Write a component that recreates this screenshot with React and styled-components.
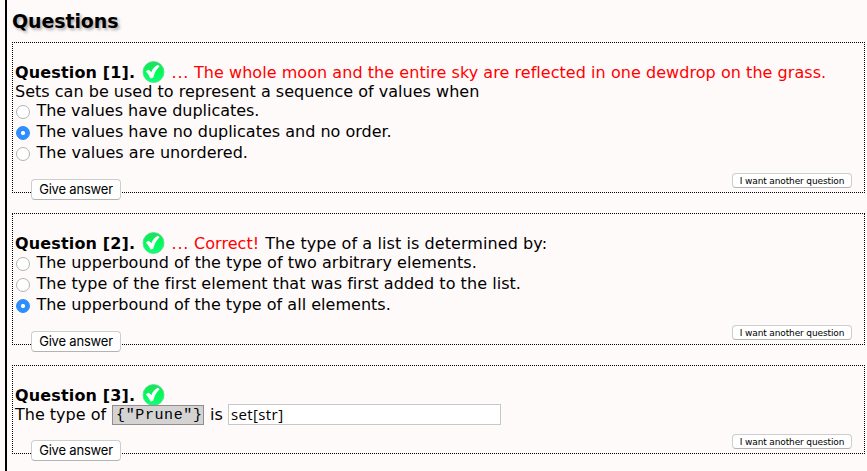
import React from "react";
import styled, { createGlobalStyle } from "styled-components";

const GlobalStyle = createGlobalStyle`
  * { box-sizing: border-box; }
  html, body { margin: 0; background: #fffafa; overflow: hidden; }
`;

const Page = styled.main`
  height: 471px;
  margin-left: 5px;
  padding: 0 2px 0 5px;
  border-left: 2px solid #000;
  background: #fffafa;
  color: #000;
  font: 16px "DejaVu Sans", Verdana, sans-serif;
  font-variant-ligatures: none;
  overflow: hidden;
`;

const Heading = styled.h2`
  margin: 0;
  height: 42px;
  padding-top: 10px;
  font-size: 19px;
  line-height: 22px;
  font-weight: bold;
  letter-spacing: -0.1px;
  text-shadow: 2px 2px 3px #aaa;
`;

const QuestionBox = styled.form`
  position: relative;
  width: 853px;
  height: ${(p) => p.$height}px;
  margin: 0 0 20px;
  padding: 18px 0 0 2px;
  border: 1px dotted #000;
`;

const Row = styled.div`
  display: flex;
  align-items: center;
  height: ${(p) => p.$height || 21}px;
  margin-top: ${(p) => p.$top || 0}px;
  white-space: pre;
`;

const Title = styled.b`
  width: 127px;
  letter-spacing: 0.15px;
`;

const Text = styled.span`
  color: ${(p) => (p.$red ? "#f00" : "#000")};
  margin-left: ${(p) => p.$gap || 0}px;
  letter-spacing: ${(p) => p.$spacing || 0}px;
`;

const Dots = styled.span`
  width: 22.5px;
  margin-left: 6.5px;
  color: #f00;
  letter-spacing: 0.8px;
`;

const OptionList = styled.div`
  margin-top: ${(p) => p.$top || 0}px;
`;

const Option = styled.label`
  display: flex;
  height: 21px;
  line-height: 19px;
  white-space: pre;
  letter-spacing: ${(p) => p.$spacing || 0}px;
`;

const Radio = styled.input`
  appearance: none;
  flex: none;
  width: 14px;
  height: 14px;
  margin: 4px 6.4px 0 1px;
  border: 1px solid #b4b2b2;
  border-radius: 50%;
  background: #fff;
  &:checked {
    border-color: #2a8bfa;
    background: radial-gradient(circle, #fff 0 1.7px, #2d8fff 2.4px);
  }
`;

const Code = styled.code`
  width: 92px;
  height: 20px;
  margin: 1px 0 0 6px;
  padding-left: 3px;
  border: 1px solid #998a8a;
  background: #d3d3d3;
  font: 15px/20px "Liberation Mono", "Courier New", monospace;
  letter-spacing: 0.6px;
`;

const Answer = styled.input`
  width: 273px;
  height: 21px;
  margin: 0 0 0 5px;
  padding: 0 2px 1px;
  border: 1px solid #c8c8c8;
  background: #fff;
  color: #000;
  font: 15px "Open Sans", sans-serif;
  letter-spacing: 0.4px;
  border-radius: 0;
  outline: none;
`;

const Button = styled.button`
  position: absolute;
  padding: 0;
  color: #000;
  background: #fff;
  border: 1px solid #cfcccc;
  border-bottom-color: #b4b2b2;
  border-radius: 4px;
  white-space: nowrap;
`;

const GiveButton = styled(Button)`
  left: 18px;
  bottom: -8px;
  width: 90px;
  height: 21px;
  padding-bottom: 1px;
  font: 13px/18px Inter, sans-serif;
  letter-spacing: -0.2px;
`;

const AnotherButton = styled(Button)`
  right: 12px;
  bottom: 4px;
  width: 120px;
  height: 15px;
  padding-top: 1px;
  font: 9px/12px "DejaVu Sans", sans-serif;
  letter-spacing: -0.13px;
`;

const CheckIcon = () => (
  <svg width="23" height="22" viewBox="0 0 23 22">
    <defs>
      <linearGradient id="badge" x1="0" y1="0" x2="0" y2="1">
        <stop offset="0" stopColor="#22dc60" />
        <stop offset="0.5" stopColor="#02fa58" />
        <stop offset="1" stopColor="#10ff78" />
      </linearGradient>
    </defs>
    <circle cx="11.5" cy="11" r="10.5" fill="url(#badge)" stroke="#4fe088" strokeWidth="0.8" />
    <path d="M3.8 10.6 L6.2 8.8 C7.6 9.4 8.4 10.2 9.3 11.2 C10.6 7.8 12.8 5.4 16 3.8 L17.6 5.2 C14.4 8.4 12.4 11.8 11.2 16.8 L8.6 17.6 C7.2 14.8 5.8 12.6 3.8 10.6 Z" fill="#fff" />
  </svg>
);

const Question = ({ number, height, message, prompt, children }) => (
  <QuestionBox $height={height}>
    <Row $height={22}>
      <Title>Question [{number}].</Title>
      <CheckIcon />
      {message && <Dots>...</Dots>}
      {message && <Text $red $spacing={0.05}>{message}</Text>}
      {prompt && <Text $gap={6} $spacing={0.08}>{prompt}</Text>}
    </Row>
    {children}
    <GiveButton type="button">Give answer</GiveButton>
    <AnotherButton type="button">I want another question</AnotherButton>
  </QuestionBox>
);

const Options = ({ name, items, selected, top }) => (
  <OptionList $top={top}>
    {items.map(([item, spacing], i) => (
      <Option key={item} $spacing={spacing}>
        <Radio type="radio" name={name} defaultChecked={i === selected} />
        {item}
      </Option>
    ))}
  </OptionList>
);

export default function App() {
  return (
    <>
      <GlobalStyle />
      <Page>
        <Heading>Questions</Heading>
        <Question
          number={1}
          height={151}
          message="The whole moon and the entire sky are reflected in one dewdrop on the grass."
        >
          <Row $height={18} $top={-1}>
            <Text $spacing={0.02}>Sets can be used to represent a sequence of values when</Text>
          </Row>
          <Options
            name="q1"
            selected={1}
            top={1}
            items={[
              ["The values have duplicates.", -0.03],
              ["The values have no duplicates and no order.", 0],
              ["The values are unordered.", 0.04],
            ]}
          />
        </Question>
        <Question number={2} height={132} message="Correct!" prompt="The type of a list is determined by:">
          <Options
            name="q2"
            selected={2}
            top={-1}
            items={[
              ["The upperbound of the type of two arbitrary elements.", 0.03],
              ["The type of the first element that was first added to the list.", 0.05],
              ["The upperbound of the type of all elements.", 0.02],
            ]}
          />
        </Question>
        <Question number={3} height={89}>
          <Row $top={-2}>
            <Text>The type of</Text>
            <Code>{'{"Prune"}'}</Code>
            <Text $gap={6}>is</Text>
            <Answer defaultValue="set[str]" aria-label="Answer" />
          </Row>
        </Question>
      </Page>
    </>
  );
}
